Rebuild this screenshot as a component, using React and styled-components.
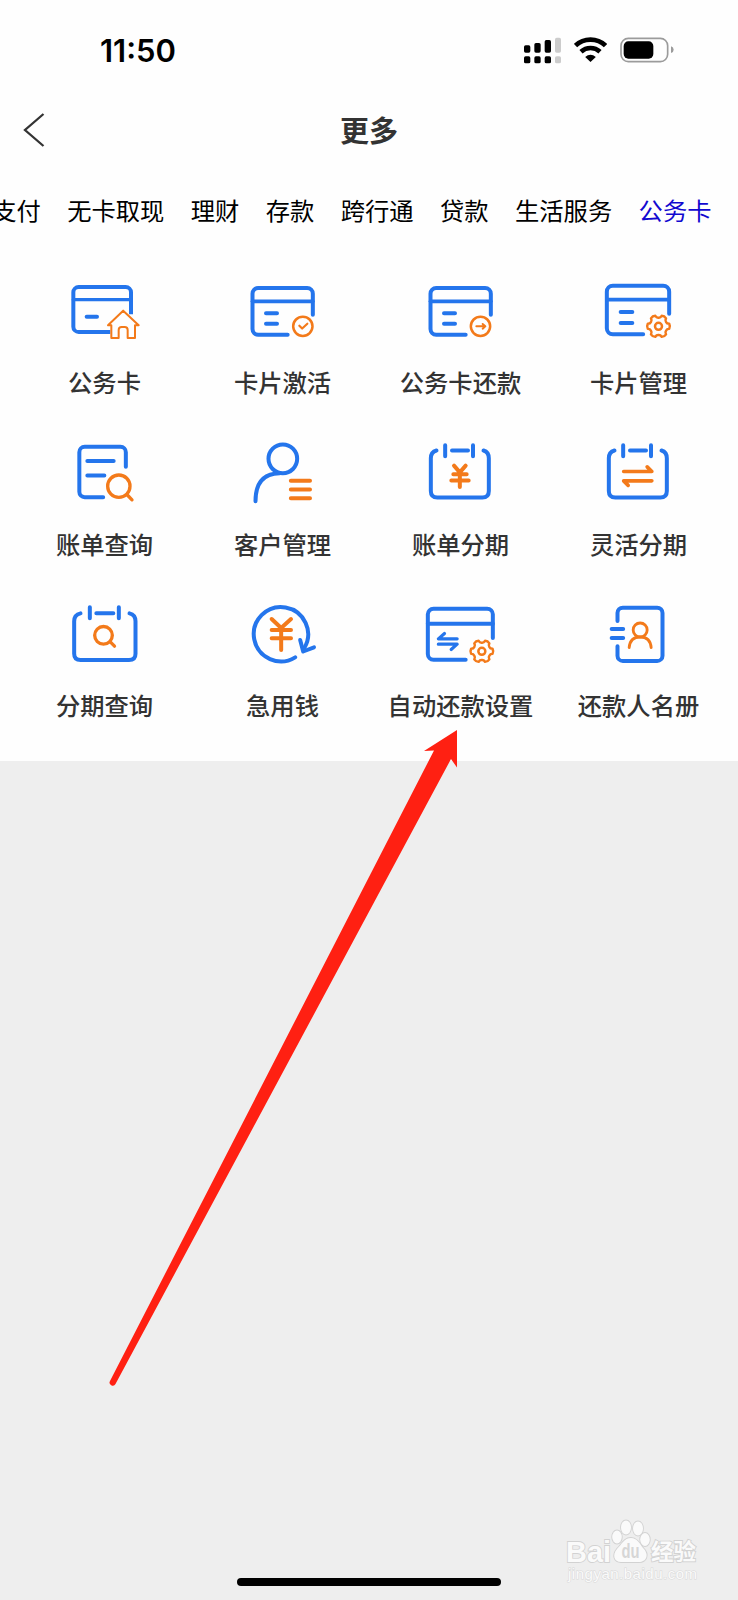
import styled, { createGlobalStyle } from "styled-components";

const BLUE = "#2475ec";
const ORANGE = "#f37a1a";

const tabs = ["支付", "无卡取现", "理财", "存款", "跨行通", "贷款", "生活服务", "公务卡"];

// six rounded teeth around the centre
function Gear({ cx, cy }) {
  const point = (deg, r) => {
    const a = (deg * Math.PI) / 180;
    return `${(cx + r * Math.cos(a)).toFixed(1)} ${(cy + r * Math.sin(a)).toFixed(1)}`;
  };
  let d = `M${point(-13, 33)}`;
  for (let k = 0; k < 6; k++) {
    const a = k * 60;
    d += ` Q${point(a, 36)} ${point(a + 13, 33)}`;
    d += ` Q${point(a + 17, 26)} ${point(a + 30, 26)}`;
    d += ` Q${point(a + 43, 26)} ${point(a + 47, 33)}`;
  }
  return (
    <g stroke={ORANGE} strokeWidth="7.5">
      <path d={`${d}Z`} />
      <circle cx={cx} cy={cy} r="10.5" />
    </g>
  );
}

function CardBody() {
  return (
    <g stroke={BLUE}>
      <path d="M142 188H53.500a17 17 0 0 1-17-17V65a17 17 0 0 1 17-17H200.500a17 17 0 0 1 17 17V128" />
      <path d="M36.500 88H217.500" strokeWidth="11" />
      <path d="M77 124H110M77 155H110" />
    </g>
  );
}

function CalendarBody() {
  return (
    <g stroke={BLUE}>
      <path d="M54.500 52.500Q37.500 57 37.500 76V174Q37.500 193.500 57 193.500H192Q211.500 193.500 211.500 174V76Q211.500 57 195.500 52.500" />
      <path d="M80.500 37V70M164 37V70M101 52.500H149" />
    </g>
  );
}

const items = [
  {
    label: "公务卡",
    icon: (
      <>
        <g stroke={BLUE}>
          <path
            d="M144 180H49a16 16 0 0 1-16-16V61a16 16 0 0 1 16-16H190a16 16 0 0 1 16 16V127"
            strokeLinecap="butt"
          />
          <path d="M33 83H206" strokeWidth="10" />
          <path d="M73 134H104" />
        </g>
        <path
          d="M182.500 116L137 160H147V198H169V174Q169 165 178 165H187Q196 165 196 174V198H218V160H229Z"
          stroke={ORANGE}
          strokeWidth="6"
        />
      </>
    ),
  },
  {
    label: "卡片激活",
    icon: (
      <>
        <CardBody />
        <g stroke={ORANGE} strokeWidth="7.500">
          <circle cx="187.500" cy="163" r="29" />
          <path d="M177 161L185.500 169.500L201 155" strokeWidth="6.500" />
        </g>
      </>
    ),
  },
  {
    label: "公务卡还款",
    icon: (
      <>
        <CardBody />
        <g stroke={ORANGE} strokeWidth="7.500">
          <circle cx="186.500" cy="163" r="29" />
          <path d="M174 163H200M193 156L201 163L193 170" strokeWidth="6" />
        </g>
      </>
    ),
  },
  {
    label: "卡片管理",
    icon: (
      <>
        <g stroke={BLUE}>
          <path d="M140.500 187H49.500a18 18 0 0 1-18-18V59a18 18 0 0 1 18-18H200.500a18 18 0 0 1 18 18V125" />
          <path d="M31.500 83H218.500" strokeWidth="11" />
          <path d="M73 120H108M73 153H108" />
        </g>
        <Gear cx={186.5} cy={163} />
      </>
    ),
  },
  {
    label: "账单查询",
    icon: (
      <>
        <g stroke={BLUE}>
          <path d="M122.500 192.500H67a16 16 0 0 1-16-16V57.500a16 16 0 0 1 16-16H174.500a16 16 0 0 1 16 16V101" />
          <path d="M75 84H154M75 127.500H126" />
        </g>
        <g stroke={ORANGE} strokeWidth="10">
          <circle cx="169.500" cy="159.500" r="33.500" />
          <path d="M195 186L209 200.500" />
        </g>
      </>
    ),
  },
  {
    label: "客户管理",
    icon: (
      <>
        <g stroke={BLUE}>
          <circle cx="127.500" cy="77.500" r="43" />
          <path d="M45.500 205Q45.500 122 118 121" />
        </g>
        <path d="M151.500 143H209M151.500 169.500H209M151.500 196H209" stroke={ORANGE} strokeWidth="12" />
      </>
    ),
  },
  {
    label: "账单分期",
    icon: (
      <>
        <CalendarBody />
        <path
          d="M107 98L124.500 118L142 98M105 123.500H145M99 142.500H151M124.500 118V162"
          stroke={ORANGE}
        />
      </>
    ),
  },
  {
    label: "灵活分期",
    icon: (
      <>
        <CalendarBody />
        <path d="M82 115.500H166.500L152.500 101.500M166.500 143.500H82L95.500 157" stroke={ORANGE} strokeWidth="11" />
      </>
    ),
  },
  {
    label: "分期查询",
    icon: (
      <>
        <g stroke={BLUE}>
          <path d="M54.500 55Q35.500 59 35.500 79V176Q35.500 195 55 195H200Q219.500 195 219.500 176V79Q219.500 59 201.500 55" />
          <path d="M82.500 37V70M169.500 37V70M102 55H153" />
        </g>
        <g stroke={ORANGE} strokeWidth="10">
          <circle cx="123.500" cy="121" r="26.500" />
          <path d="M143 140L156.500 153.500" />
        </g>
      </>
    ),
  },
  {
    label: "急用钱",
    icon: (
      <>
        <g stroke={BLUE}>
          <path d="M164.500 187A81.500 81.500 0 1 1 192 159" />
          <path d="M179.500 135L188.500 169.500L221 157" />
        </g>
        <path
          d="M94 72L122.500 99L152 72M94 105H152M94 130H152M122.500 99V165"
          stroke={ORANGE}
          strokeWidth="12"
        />
      </>
    ),
  },
  {
    label: "自动还款设置",
    icon: (
      <>
        <g stroke={BLUE}>
          <path d="M142 194H45.500a17 17 0 0 1-17-17V58a17 17 0 0 1 17-17H206.500a17 17 0 0 1 17 17V129" />
          <path d="M28.500 86H223.500" />
          <path d="M116.500 131.500H60L78.500 115.500M60 147.500H116.500L98.500 163.500" strokeWidth="9.500" />
        </g>
        <Gear cx={190.5} cy={169} />
      </>
    ),
  },
  {
    label: "还款人名册",
    icon: (
      <>
        <g stroke={BLUE}>
          <path d="M63.500 78V54a16 16 0 0 1 16-16H182.500a16 16 0 0 1 16 16V182a16 16 0 0 1-16 16H79.500a16 16 0 0 1-16-16V154" />
          <path d="M46 102H80.500M46 129H80.500" />
        </g>
        <g stroke={ORANGE} strokeWidth="8.500">
          <circle cx="131.500" cy="105" r="21" />
          <path d="M98.500 158Q101 126 131.500 126Q162 126 164.500 158" />
        </g>
      </>
    ),
  },
];

export default function App() {
  return (
    <Screen>
      <GlobalStyle />
      <Panel>
        <StatusBar>
          <Time>11:50</Time>
          <StatusIcons>
            <svg width="37" height="27" viewBox="0 0 111 81">
              <rect x="0" y="25" width="19" height="22" rx="5" />
              <rect x="31" y="18" width="19" height="29" rx="5" />
              <rect x="62" y="9" width="19" height="38" rx="5" />
              <rect x="93" y="2" width="18" height="45" rx="5" fill="#ccc" />
              <rect x="0" y="58" width="19" height="21" rx="5" />
              <rect x="31" y="58" width="19" height="21" rx="5" />
              <rect x="62" y="58" width="19" height="21" rx="5" />
              <rect x="93" y="58" width="18" height="21" rx="5" fill="#ccc" />
            </svg>
            <svg width="33" height="27" viewBox="0 0 99 81" fill="none" stroke="#000" strokeWidth="14">
              <path d="M4.500 26Q23 8 49.500 8Q76 8 94.500 26" />
              <path d="M21 44Q33 33 49.500 33Q66 33 78 44" />
              <path d="M33.500 60Q49.500 46 65.500 60L49.500 75Z" fill="#000" stroke="none" />
            </svg>
            <svg width="54" height="27" viewBox="0 0 162 81">
              <rect x="3" y="4" width="140" height="70" rx="22" fill="none" stroke="#9b9b9b" strokeWidth="5" />
              <rect x="11" y="13" width="89" height="52" rx="14" />
              <path d="M153 28Q161 30 161 38Q161 46 153 48Z" fill="#9b9b9b" />
            </svg>
          </StatusIcons>
        </StatusBar>
        <Header>
          <BackButton aria-label="返回">
            <svg width="22" height="36" viewBox="0 0 22 36" fill="none" stroke="#333" strokeWidth="2.300">
              <path d="M20.500 2L2 18L20.500 34" />
            </svg>
          </BackButton>
          <Title>更多</Title>
        </Header>
        <Tabs>
          {tabs.map((tab) => (
            <Tab key={tab} $active={tab === "公务卡"}>
              {tab}
            </Tab>
          ))}
        </Tabs>
        <Menu>
          {items.map(({ label, icon }) => (
            <MenuItem key={label}>
              <MenuIcon viewBox="2 0 252 228">{icon}</MenuIcon>
              <Label>{label}</Label>
            </MenuItem>
          ))}
        </Menu>
      </Panel>
      <Pointer viewBox="0 0 360 670">
        <path d="M352 0L319 21L329 20.500L5 651A3 3 0 0 0 10.500 654L346 29L352 37.500Z" />
      </Pointer>
      <Watermark viewBox="0 0 140 70">
        <g stroke="#d2d2d2" strokeWidth="1.800" paintOrder="stroke">
          <text x="4" y="47.500" fontSize="30" textLength="45" lengthAdjust="spacingAndGlyphs" fontWeight="700">
            Bai
          </text>
          <ellipse cx="55" cy="23" rx="4.800" ry="6.500" />
          <ellipse cx="64" cy="13.500" rx="5" ry="7" />
          <ellipse cx="76" cy="14.500" rx="5" ry="7" />
          <ellipse cx="83" cy="25.500" rx="4.800" ry="6.500" />
          <path d="M69 24C75 24 78 30 81 34C88 41 84 48 77 48H59C52 48 50 41 55 35C60 30 62 24 69 24Z" />
          <text x="89" y="46" fontSize="22.500" fontWeight="700" textLength="45">
            经验
          </text>
        </g>
        <text x="59.500" y="44" fontSize="20" fontWeight="700" fill="#d6d6d6" textLength="18" lengthAdjust="spacingAndGlyphs">
          du
        </text>
        <text x="6" y="65" fontSize="15" stroke="#d8d8d8" strokeWidth="1" paintOrder="stroke" textLength="129">
          jingyan.baidu.com
        </text>
      </Watermark>
      <HomeBar />
    </Screen>
  );
}

const GlobalStyle = createGlobalStyle`
  * {
    box-sizing: border-box;
  }
  body {
    margin: 0;
    background: #eeeeee;
    font-family: "Noto Sans CJK SC", sans-serif;
  }
`;
const Screen = styled.div`
  position: relative;
  display: flex;
  flex-direction: column;
  justify-content: space-between;
  align-items: center;
  width: 738px;
  height: 1600px;
  overflow: hidden;
  background: #eeeeee;
`;
const Panel = styled.main`
  width: 100%;
  height: 760.5px;
  background: #fefefe;
`;
const StatusBar = styled.div`
  display: flex;
  align-items: center;
  justify-content: space-between;
  height: 100px;
  padding: 0 64px 0 100px;
`;
const Time = styled.span`
  font-family: Inter, sans-serif;
  font-size: 31px;
  font-weight: 600;
  letter-spacing: 0;
`;
const StatusIcons = styled.div`
  display: flex;
  align-items: center;
  gap: 13px;
`;
const Header = styled.header`
  display: grid;
  grid-template-columns: 100px 1fr 100px;
  align-items: center;
  height: 60px;
`;
const BackButton = styled.button`
  display: flex;
  padding: 0 0 0 23px;
  border: 0;
  background: none;
`;
const Title = styled.h1`
  margin: 0;
  padding-bottom: 2px;
  color: #333;
  font-size: 29px;
  font-weight: 700;
  line-height: 58px;
  text-align: center;
`;
const Tabs = styled.nav`
  display: flex;
  justify-content: flex-end;
  align-items: center;
  gap: 26.4px;
  height: 112px;
  padding: 0 26.5px 12px 0;
  overflow: hidden;
`;
const Tab = styled.span`
  flex: none;
  color: ${({ $active }) => ($active ? "#1108d0" : "#000")};
  font-size: 24.3px;
  line-height: 36px;
`;
const Menu = styled.section`
  display: grid;
  grid-template-columns: repeat(4, 178px);
  grid-auto-rows: 161.4px;
  padding-left: 15.5px;
`;
const MenuItem = styled.div`
  display: flex;
  flex-direction: column;
  align-items: center;
`;
const MenuIcon = styled.svg`
  width: 84px;
  height: 76px;
  fill: none;
  stroke-width: 12px;
  stroke-linecap: round;
  stroke-linejoin: round;
`;
const Label = styled.span`
  margin-top: 16.4px;
  color: #333;
  font-size: 24.3px;
  font-weight: 500;
  line-height: 36px;
  white-space: nowrap;
`;
const Pointer = styled.svg`
  position: absolute;
  left: 105px;
  top: 730px;
  width: 360px;
  height: 670px;
  fill: #ff2012;
`;
const Watermark = styled.svg`
  position: absolute;
  left: 562px;
  top: 1514px;
  width: 140px;
  height: 70px;
  fill: #fafafa;
  font-family: "Liberation Sans", "Noto Sans CJK SC", sans-serif;
`;
const HomeBar = styled.div`
  width: 264px;
  height: 8px;
  margin-bottom: 14px;
  border-radius: 4px;
  background: #000;
`;
